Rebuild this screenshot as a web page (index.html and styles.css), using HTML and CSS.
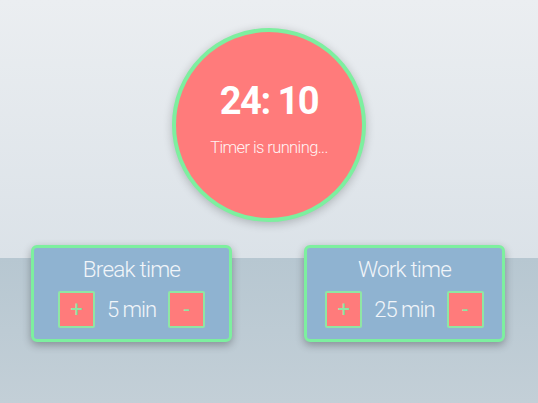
FILE: index.html
```html
<!DOCTYPE html>
<html>
<head>
<meta charset="utf-8">
<link rel="stylesheet" href="styles.css">
</head>
<body>
<div class="page">
  <div class="clock">
    <div class="time">24: 10</div>
    <div class="status">Timer is running...</div>
  </div>
  <div class="settings">
    <div class="card">
      <div class="card-title">Break time</div>
      <div class="controls">
        <button class="btn">+</button>
        <span class="value">5 min</span>
        <button class="btn">-</button>
      </div>
    </div>
    <div class="card">
      <div class="card-title">Work time</div>
      <div class="controls">
        <button class="btn">+</button>
        <span class="value">25 min</span>
        <button class="btn">-</button>
      </div>
    </div>
  </div>
</div>
</body>
</html>
```
FILE: styles.css
```css
html, body {
  margin: 0;
  padding: 0;
}
body {
  width: 538px;
  height: 403px;
  overflow: hidden;
  font-family: "Roboto", "Open Sans", sans-serif;
  background: linear-gradient(to bottom, #ebeef1 0, #dbe2e8 258px, #b7c7d1 258px, #c3cfd7 403px);
}
.page {
  display: flex;
  flex-direction: column;
  align-items: center;
  padding-top: 28px;
}
.clock {
  box-sizing: border-box;
  width: 194px;
  height: 194px;
  border-radius: 50%;
  border: 4px solid #7def9f;
  background: #ff7b7b;
  box-shadow: 0 2px 10px rgba(0,0,0,0.22);
  display: flex;
  flex-direction: column;
  align-items: center;
  color: #fff;
}
.time {
  margin-top: 46px;
  font-size: 38px;
  font-weight: 700;
  line-height: 46px;
  letter-spacing: -1.5px;
}
.status {
  margin-top: 14px;
  font-size: 16.5px;
  font-weight: 300;
  letter-spacing: -0.6px;
  color: #fff3f3;
}
.settings {
  align-self: stretch;
  display: flex;
  justify-content: space-between;
  padding: 0 33px 0 31px;
  margin-top: 23px;
}
.card {
  box-sizing: border-box;
  width: 201px;
  height: 97px;
  border: 3px solid #7def9f;
  border-radius: 6px;
  background: #8fb3d1;
  box-shadow: 0 3px 8px rgba(0,0,0,0.3);
  display: flex;
  flex-direction: column;
  align-items: center;
  color: #f1f5f9;
}
.card-title {
  margin-top: 8px;
  font-size: 22.5px;
  font-weight: 300;
  line-height: 26px;
  letter-spacing: -0.8px;
}
.controls {
  margin-top: 9px;
  display: flex;
  align-items: center;
  gap: 12px;
}
.value {
  font-size: 22px;
  font-weight: 300;
  letter-spacing: -1px;
}
.btn {
  box-sizing: border-box;
  width: 37px;
  height: 37px;
  padding: 0;
  border: 2px solid #8fe6a4;
  border-radius: 2px;
  background: #ff7b7b;
  color: #8fe6a4;
  font-family: "Roboto", sans-serif;
  font-size: 22px;
  font-weight: 400;
  line-height: 1;
}
```
